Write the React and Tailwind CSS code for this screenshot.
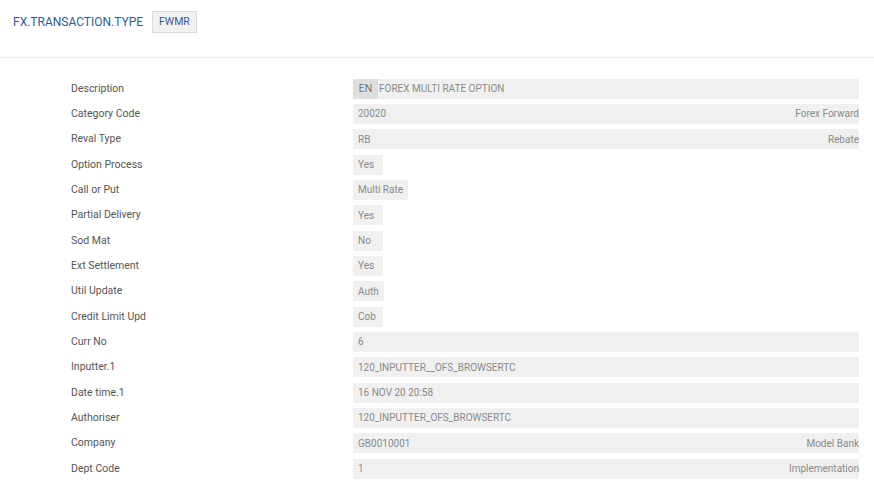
import React from 'react';

const rows = [
    { label: 'Description', value: 'FOREX MULTI RATE OPTION', lang: 'EN', full: true },
    { label: 'Category Code', value: '20020', right: 'Forex Forward', full: true },
    { label: 'Reval Type', value: 'RB', right: 'Rebate', full: true },
    { label: 'Option Process', value: 'Yes' },
    { label: 'Call or Put', value: 'Multi Rate' },
    { label: 'Partial Delivery', value: 'Yes' },
    { label: 'Sod Mat', value: 'No' },
    { label: 'Ext Settlement', value: 'Yes' },
    { label: 'Util Update', value: 'Auth' },
    { label: 'Credit Limit Upd', value: 'Cob' },
    { label: 'Curr No', value: '6', full: true },
    { label: 'Inputter.1', value: '120_INPUTTER__OFS_BROWSERTC', full: true },
    { label: 'Date time.1', value: '16 NOV 20 20:58', full: true },
    { label: 'Authoriser', value: '120_INPUTTER_OFS_BROWSERTC', full: true },
    { label: 'Company', value: 'GB0010001', right: 'Model Bank', full: true },
    { label: 'Dept Code', value: '1', right: 'Implementation', full: true },
];

const App = () => {
    return (
        <div className="min-h-screen bg-white font-['Roboto',sans-serif]">
            {/* Header */}
            <div className="h-[58px] pl-[13px] pt-[11px] border-b border-[#ececec]">
                <div className="flex items-center h-[22px]">
                    <span className="text-[12px] text-[#34598f]">FX.TRANSACTION.TYPE</span>
                    <span className="ml-[9px] h-[22px] px-[6px] flex items-center bg-[#f1f1f1] border border-[#d9d9d9] text-[10.5px] text-[#34598f]">
                        FWMR
                    </span>
                </div>
            </div>

            {/* Record fields */}
            <div className="pt-[18px] pl-[71px] pr-[15px]">
                {rows.map((row) => (
                    <div key={row.label} className="flex items-center h-[25.33px]">
                        <div className="w-[282px] shrink-0 text-[10.5px] text-[#555]">{row.label}</div>
                        <div
                            className={`h-[20px] flex items-center bg-[#f0f0f0] text-[10px] text-[#8a8a8a] ${row.full ? 'flex-1' : 'min-w-[30px] px-[5px]'}`}
                        >
                            {row.lang && (
                                <span className="h-full w-[25px] flex items-center justify-center bg-[#dedede] text-[#444] text-[10.5px] font-light">
                                    {row.lang}
                                </span>
                            )}
                            <span className={row.lang ? 'pl-[1px]' : row.full ? 'pl-[5px]' : ''}>{row.value}</span>
                            {row.right && <span className="ml-auto">{row.right}</span>}
                        </div>
                    </div>
                ))}
            </div>
        </div>
    );
};

export default App;
